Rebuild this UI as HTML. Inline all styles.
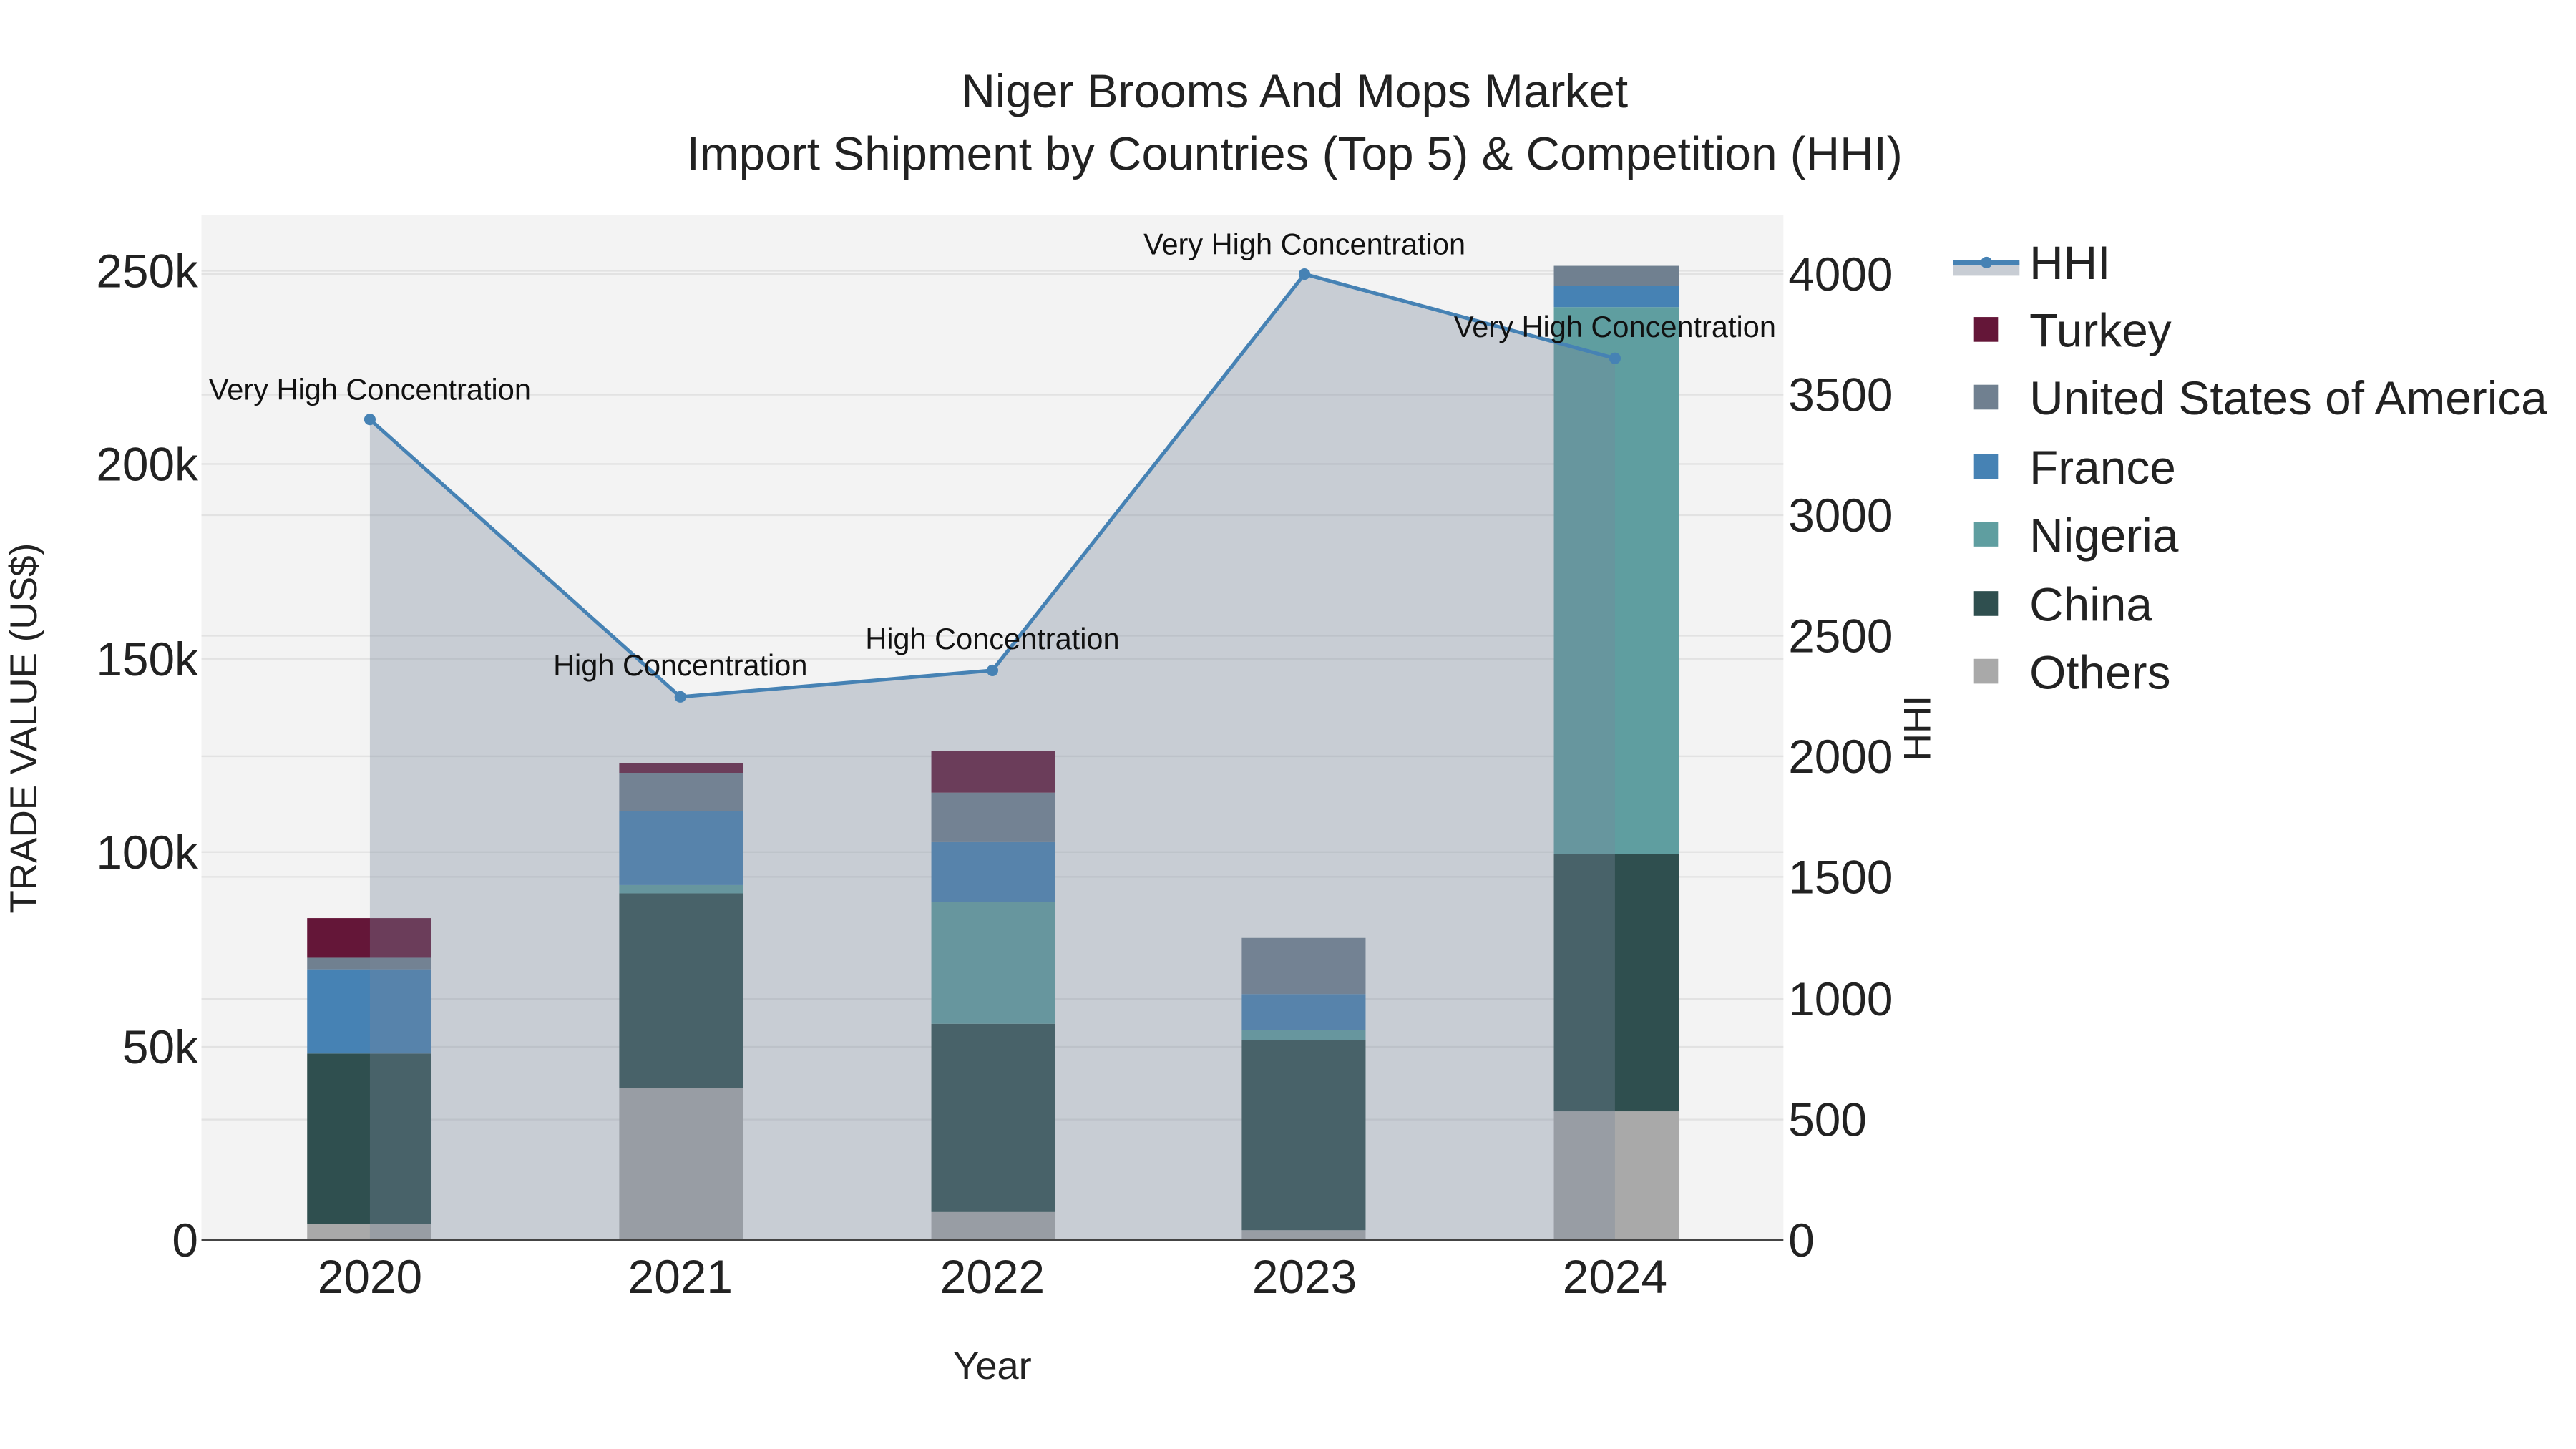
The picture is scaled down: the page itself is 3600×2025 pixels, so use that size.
<!DOCTYPE html>
<html><head><meta charset="utf-8"><style>html,body{margin:0;padding:0;background:#fff}svg{display:block}</style></head>
<body>
<svg width="3600" height="2025" viewBox="0 0 1560 877.5" preserveAspectRatio="none" xmlns="http://www.w3.org/2000/svg" font-family="Liberation Sans, sans-serif">
<rect x="0" y="0" width="1560" height="877.5" fill="#fff"/>
<rect x="122" y="130" width="958" height="621" fill="#f3f3f3"/>
<g stroke="#e2e2e2" stroke-width="1">
<line x1="122" x2="1080" y1="634" y2="634"/><line x1="122" x2="1080" y1="516" y2="516"/><line x1="122" x2="1080" y1="399" y2="399"/><line x1="122" x2="1080" y1="281" y2="281"/><line x1="122" x2="1080" y1="164" y2="164"/>
<line x1="122" x2="1080" y1="678" y2="678"/><line x1="122" x2="1080" y1="605" y2="605"/><line x1="122" x2="1080" y1="531" y2="531"/><line x1="122" x2="1080" y1="458" y2="458"/><line x1="122" x2="1080" y1="385" y2="385"/><line x1="122" x2="1080" y1="312" y2="312"/><line x1="122" x2="1080" y1="239" y2="239"/><line x1="122" x2="1080" y1="166" y2="166"/>
</g>
<g>
<rect x="186" y="741" width="75" height="10" fill="#a9a9a9"/>
<rect x="186" y="638" width="75" height="103" fill="#2f4f4f"/>
<rect x="186" y="587" width="75" height="51" fill="#4682b4"/>
<rect x="186" y="580" width="75" height="7" fill="#708090"/>
<rect x="186" y="556" width="75" height="24" fill="#641638"/>

<rect x="375" y="659" width="75" height="92" fill="#a9a9a9"/>
<rect x="375" y="541" width="75" height="118" fill="#2f4f4f"/>
<rect x="375" y="536" width="75" height="5" fill="#5f9ea0"/>
<rect x="375" y="491" width="75" height="45" fill="#4682b4"/>
<rect x="375" y="468" width="75" height="23" fill="#708090"/>
<rect x="375" y="462" width="75" height="6" fill="#641638"/>

<rect x="564" y="734" width="75" height="17" fill="#a9a9a9"/>
<rect x="564" y="620" width="75" height="114" fill="#2f4f4f"/>
<rect x="564" y="546" width="75" height="74" fill="#5f9ea0"/>
<rect x="564" y="510" width="75" height="36" fill="#4682b4"/>
<rect x="564" y="480" width="75" height="30" fill="#708090"/>
<rect x="564" y="455" width="75" height="25" fill="#641638"/>

<rect x="752" y="745" width="75" height="6" fill="#a9a9a9"/>
<rect x="752" y="630" width="75" height="115" fill="#2f4f4f"/>
<rect x="752" y="624" width="75" height="6" fill="#5f9ea0"/>
<rect x="752" y="602" width="75" height="22" fill="#4682b4"/>
<rect x="752" y="568" width="75" height="34" fill="#708090"/>

<rect x="941" y="673" width="76" height="78" fill="#a9a9a9"/>
<rect x="941" y="517" width="76" height="156" fill="#2f4f4f"/>
<rect x="941" y="186" width="76" height="331" fill="#5f9ea0"/>
<rect x="941" y="173" width="76" height="13" fill="#4682b4"/>
<rect x="941" y="161" width="76" height="12" fill="#708090"/>
</g>
<polygon points="224,751 224,254 412,422 601,406 790,166 978,217 978,751" fill="rgb(120,134,154)" fill-opacity="0.35"/>
<line x1="122" x2="1080" y1="751" y2="751" stroke="#444" stroke-width="1.5"/>
<polyline points="224,254 412,422 601,406 790,166 978,217" fill="none" stroke="#4682b4" stroke-width="2.2"/>
<g fill="#4682b4"><circle cx="224" cy="254" r="3.5"/><circle cx="412" cy="422" r="3.5"/><circle cx="601" cy="406" r="3.5"/><circle cx="790" cy="166" r="3.5"/><circle cx="978" cy="217" r="3.5"/></g>
<g font-size="18" fill="#111" text-anchor="middle">
<text x="224" y="242">Very High Concentration</text>
<text x="412" y="409">High Concentration</text>
<text x="601" y="393">High Concentration</text>
<text x="790" y="154">Very High Concentration</text>
<text x="978" y="204">Very High Concentration</text>
</g>
<g font-size="28.5" fill="#222" text-anchor="middle">
<text x="784" y="65">Niger Brooms And Mops Market</text>
<text x="784" y="103">Import Shipment by Countries (Top 5) &amp; Competition (HHI)</text>
</g>
<g font-size="28.5" fill="#222" text-anchor="end">
<text x="120" y="761">0</text><text x="120" y="644">50k</text><text x="120" y="526">100k</text><text x="120" y="409">150k</text><text x="120" y="291">200k</text><text x="120" y="174">250k</text>
</g>
<g font-size="28.5" fill="#222" text-anchor="start">
<text x="1083" y="761">0</text><text x="1083" y="688">500</text><text x="1083" y="615">1000</text><text x="1083" y="541">1500</text><text x="1083" y="468">2000</text><text x="1083" y="395">2500</text><text x="1083" y="322">3000</text><text x="1083" y="249">3500</text><text x="1083" y="176">4000</text>
</g>
<g font-size="28.5" fill="#222" text-anchor="middle">
<text x="224" y="783">2020</text><text x="412" y="783">2021</text><text x="601" y="783">2022</text><text x="790" y="783">2023</text><text x="978" y="783">2024</text>
</g>
<text x="601" y="835" font-size="23.5" fill="#222" text-anchor="middle">Year</text>
<text transform="translate(22,441) rotate(-90)" font-size="23" fill="#222" text-anchor="middle">TRADE VALUE (US$)</text>
<text transform="translate(1169,441) rotate(-90)" font-size="23" fill="#222" text-anchor="middle">HHI</text>
<rect x="1183" y="159" width="40" height="8" fill="#c8cdd4"/>
<line x1="1183" x2="1223" y1="159" y2="159" stroke="#4682b4" stroke-width="3"/>
<circle cx="1203" cy="159" r="3.5" fill="#4682b4"/>
<rect x="1195" y="192" width="15" height="15" fill="#641638"/>
<rect x="1195" y="233" width="15" height="15" fill="#708090"/>
<rect x="1195" y="275" width="15" height="15" fill="#4682b4"/>
<rect x="1195" y="316" width="15" height="15" fill="#5f9ea0"/>
<rect x="1195" y="358" width="15" height="15" fill="#2f4f4f"/>
<rect x="1195" y="399" width="15" height="15" fill="#a9a9a9"/>
<g font-size="28.5" fill="#222">
<text x="1229" y="169">HHI</text>
<text x="1229" y="210">Turkey</text>
<text x="1229" y="251">United States of America</text>
<text x="1229" y="293">France</text>
<text x="1229" y="334">Nigeria</text>
<text x="1229" y="376">China</text>
<text x="1229" y="417">Others</text>
</g>
</svg>
</body></html>
